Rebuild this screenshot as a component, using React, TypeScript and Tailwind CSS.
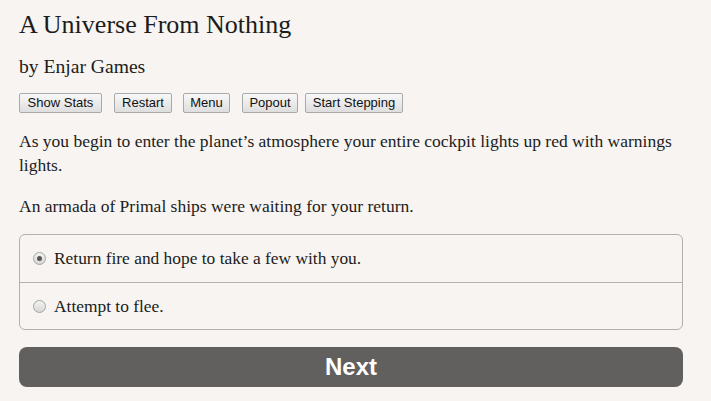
import { useState } from "react";

const buttons = [
  { label: "Show Stats", cls: "w-[83px] mr-[12px]" },
  { label: "Restart", cls: "w-[58px] mr-[11px]" },
  { label: "Menu", cls: "w-[47px] mr-[12px]" },
  { label: "Popout", cls: "w-[56px] mr-[7px]" },
  { label: "Start Stepping", cls: "w-[98px]" },
];

const choices = [
  "Return fire and hope to take a few with you.",
  "Attempt to flee.",
];

export default function App() {
  const [picked, setPicked] = useState(0);

  return (
    <div className="min-h-[401px] bg-[#f7f4f1] pl-[19px] pr-[28px] pt-[8px] font-['Liberation_Serif',serif] text-[#1c1c1c]">
      <h1 className="h-[34px] text-[26px] leading-[34px]">A Universe From Nothing</h1>
      <h2 className="mt-[12px] h-[26px] text-[19.6px] leading-[26px]">by Enjar Games</h2>

      <div className="mt-[13px] flex h-[20px]">
        {buttons.map((b) => (
          <button
            key={b.label}
            className={`${b.cls} h-[20px] rounded-[2px] border border-[#a9a9a9] bg-gradient-to-b from-[#f8f8f8] to-[#dedede] font-['Liberation_Sans',sans-serif] text-[13px] leading-[18px] text-[#111]`}
          >
            {b.label}
          </button>
        ))}
      </div>

      <p className="mt-[16px] text-[17.5px] leading-[24px]">
        As you begin to enter the planet’s atmosphere your entire cockpit lights up red with warnings lights.
      </p>
      <p className="mt-[17px] text-[17.5px] leading-[24px]">
        An armada of Primal ships were waiting for your return.
      </p>

      <div className="mt-[16px] rounded-[6px] border border-[#b1b1b1]">
        {choices.map((c, i) => (
          <label
            key={c}
            className={`flex h-[47px] items-center pl-[13px] text-[17.4px] ${i > 0 ? "border-t border-[#b1b1b1]" : ""}`}
          >
            <input
              type="radio"
              name="choice"
              checked={picked === i}
              onChange={() => setPicked(i)}
              className="sr-only"
            />
            <span className="mr-[8px] flex h-[13px] w-[13px] items-center justify-center rounded-full border border-[#a4a4a4] bg-gradient-to-b from-[#f4f4f4] to-[#d6d6d6]">
              {picked === i && <span className="h-[5px] w-[5px] rounded-full bg-[#555]" />}
            </span>
            {c}
          </label>
        ))}
      </div>

      <button className="mt-[17px] h-[40px] w-full rounded-[8px] bg-[#62605e] font-['Liberation_Sans',sans-serif] text-[24px] font-bold text-white">
        Next
      </button>
    </div>
  );
}
